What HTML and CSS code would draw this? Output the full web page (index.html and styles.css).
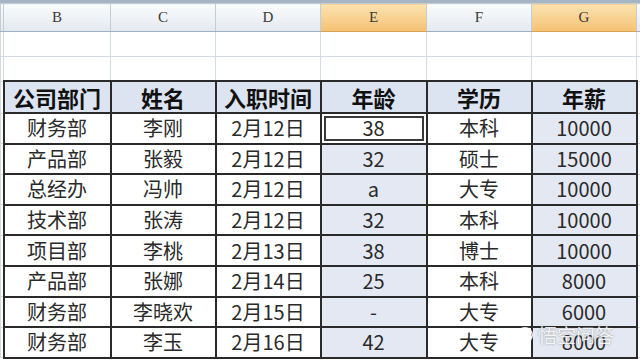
FILE: index.html
```html
<!DOCTYPE html>
<html lang="zh">
<head>
<meta charset="utf-8">
<link rel="stylesheet" href="styles.css">
</head>
<body>
<div class="sheet">
<table class="grid">
<colgroup>
<col class="c0"><col class="cb"><col class="cc"><col class="cd"><col class="ce"><col class="cf"><col class="cg"><col class="cz">
</colgroup>
<tr class="colhead">
<td class="edge"></td><td>B</td><td>C</td><td>D</td><td class="sel">E</td><td>F</td><td class="sel">G</td><td class="edge"></td>
</tr>
<tr class="empty"><td class="edge"></td><td></td><td></td><td></td><td></td><td></td><td></td><td class="edge"></td></tr>
<tr class="empty"><td class="edge"></td><td></td><td></td><td></td><td></td><td></td><td></td><td class="edge"></td></tr>
<tr class="thead">
<td class="edge"></td><td>公司部门</td><td>姓名</td><td>入职时间</td><td>年龄</td><td>学历</td><td>年薪</td><td class="edge"></td>
</tr>
<tr class="row r1"><td class="edge"></td><td>财务部</td><td>李刚</td><td>2月12日</td><td class="sh boxed"><span>38</span></td><td>本科</td><td class="sh">10000</td><td class="edge"></td></tr>
<tr class="row r2"><td class="edge"></td><td>产品部</td><td>张毅</td><td>2月12日</td><td class="sh">32</td><td>硕士</td><td class="sh">15000</td><td class="edge"></td></tr>
<tr class="row r3"><td class="edge"></td><td>总经办</td><td>冯帅</td><td>2月12日</td><td class="sh">a</td><td>大专</td><td class="sh">10000</td><td class="edge"></td></tr>
<tr class="row r4"><td class="edge"></td><td>技术部</td><td>张涛</td><td>2月12日</td><td class="sh">32</td><td>本科</td><td class="sh">10000</td><td class="edge"></td></tr>
<tr class="row r5"><td class="edge"></td><td>项目部</td><td>李桃</td><td>2月13日</td><td class="sh">38</td><td>博士</td><td class="sh">10000</td><td class="edge"></td></tr>
<tr class="row r6"><td class="edge"></td><td>产品部</td><td>张娜</td><td>2月14日</td><td class="sh">25</td><td>本科</td><td class="sh">8000</td><td class="edge"></td></tr>
<tr class="row r7"><td class="edge"></td><td>财务部</td><td>李晓欢</td><td>2月15日</td><td class="sh">-</td><td>大专</td><td class="sh">6000</td><td class="edge"></td></tr>
<tr class="row r8"><td class="edge"></td><td>财务部</td><td>李玉</td><td>2月16日</td><td class="sh">42</td><td>大专</td><td class="sh">8000</td><td class="edge"></td></tr>
</table>
<div class="watermark">
<svg class="wm-icon" width="18" height="18" viewBox="0 0 20 20"><circle cx="10" cy="10" r="8" fill="none" stroke="rgba(255,255,255,0.9)" stroke-width="2"/><circle cx="10" cy="10" r="3" fill="rgba(255,255,255,0.9)"/></svg>
<span>悟空问答</span>
</div>
</div>
</body>
</html>
```
FILE: styles.css
```css
html, body {
  margin: 0;
  padding: 0;
  background: #ffffff;
}
body {
  width: 640px;
  height: 360px;
  overflow: hidden;
  font-family: "Noto Sans CJK SC", "Noto Sans", sans-serif;
}
.sheet {
  position: relative;
  width: 640px;
  height: 360px;
  overflow: hidden;
  border-top: 3px solid #a7b4c4;
  box-sizing: border-box;
}
.grid {
  border-collapse: collapse;
  table-layout: fixed;
  width: 641px;
}
.c0 { width: 3px; }
.cb { width: 107px; }
.cc { width: 105px; }
.cd { width: 105px; }
.ce { width: 106px; }
.cf { width: 105px; }
.cg { width: 105px; }
.cz { width: 5px; }
.grid td {
  padding: 0;
  text-align: center;
  overflow: hidden;
  white-space: nowrap;
}
.colhead td {
  height: 27px;
  font-family: "Liberation Serif", "DejaVu Serif", serif;
  font-size: 15px;
  color: #3a3a3a;
  background: linear-gradient(#f9fbfd, #e4e9ef);
  border: 1px solid #c5ccd6;
  border-bottom: 1px solid #9eb0c6;
}
.colhead td.sel {
  background: linear-gradient(#fbe3b0, #f5c173);
  border-bottom: 1px solid #d9a354;
}
.empty td {
  height: 23.5px;
  border: 1px solid #d4dae3;
}
.edge {
  border: 1px solid #d4dae3;
}
.thead td {
  height: 30px;
  font-size: 22px;
  font-weight: 700;
  color: #111;
  background: #dbe4f0;
  border: 2px solid #2a2a2a;
  line-height: 1;
}
.thead td.edge, .row td.edge {
  background: #fff;
  border: 1px solid #d4dae3;
}
.row td {
  height: 28.6px;
  font-size: 20px;
  color: #2a2a2a;
  background: #ffffff;
  border: 2px solid #2a2a2a;
  line-height: 1;
}
.row td.sh {
  background: #e3e8f2;
}
.row td.boxed {
  background: #ffffff;
  box-shadow: inset 0 0 0 2px #ffffff, inset 0 0 0 4px #3a3a3a;
}
.watermark {
  position: absolute;
  left: 516px;
  top: 318px;
  display: flex;
  align-items: center;
  gap: 4px;
  color: rgba(255, 255, 255, 0.9);
  font-size: 19px;
  text-shadow: 0 0 2px rgba(80, 80, 80, 0.6);
}
.wm-icon {
  display: block;
}
```
